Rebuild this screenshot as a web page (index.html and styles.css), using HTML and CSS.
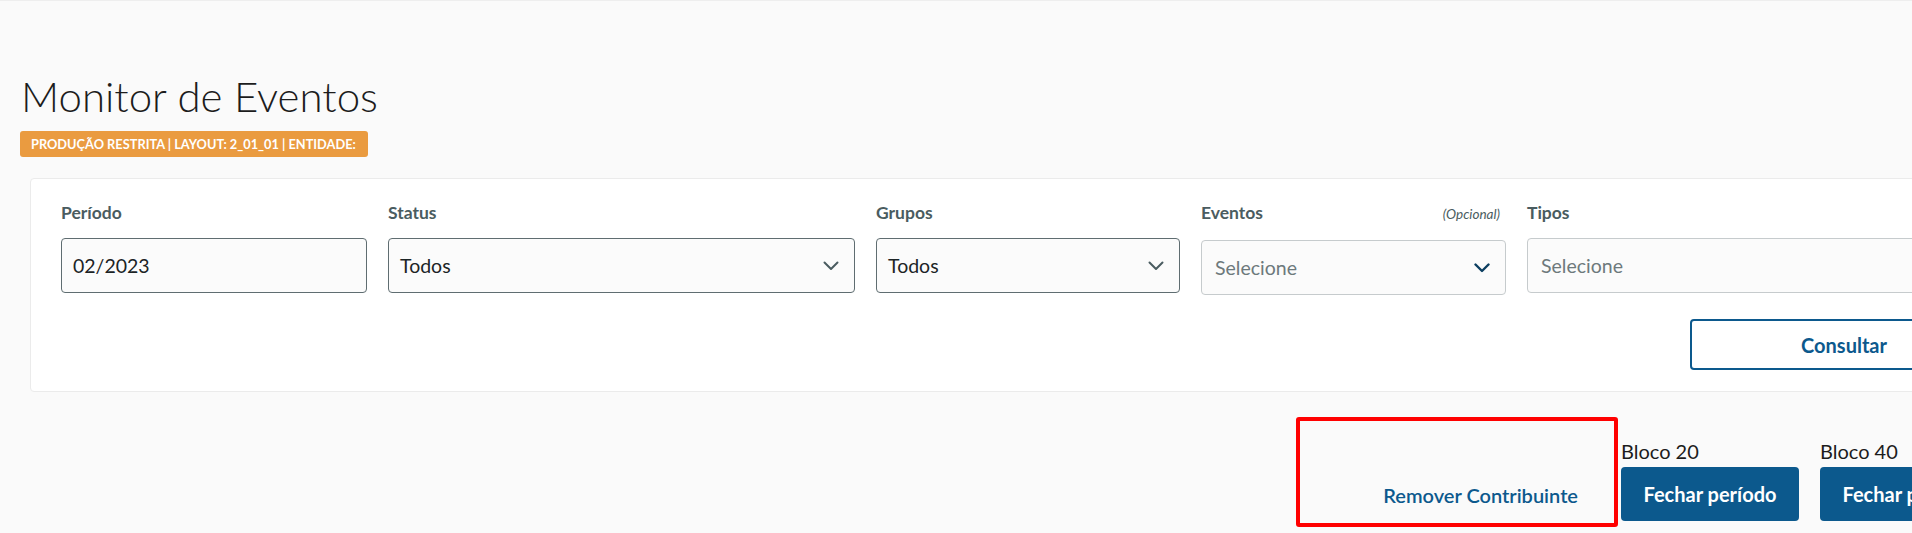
FILE: index.html
```html
<!DOCTYPE html>
<html lang="pt-BR">
<head>
	<meta charset="UTF-8">
	<title>Monitor de Eventos</title>
	<link rel="stylesheet" href="styles.css">
</head>
<body>
	<div class="page">
		<!--cabeçalho-->
		<div class="page-header">
			<h1 class="page-title">Monitor de Eventos</h1>
			<span class="env-tag">PRODUÇÃO RESTRITA | LAYOUT: 2_01_01 | ENTIDADE:</span>
		</div>

		<!--filtros-->
		<div class="filter-card">
			<div class="filter-grid">
				<div class="field">
					<div class="field-label">Período</div>
					<div class="input">02/2023</div>
				</div>
				<div class="field">
					<div class="field-label">Status</div>
					<div class="input select">
						<span>Todos</span>
						<svg class="chevron" width="16" height="10" viewBox="0 0 16 10"><path d="M1.5 1.5 8 8l6.5-6.5" fill="none" stroke="currentColor" stroke-width="2" stroke-linecap="round" stroke-linejoin="round"/></svg>
					</div>
				</div>
				<div class="field">
					<div class="field-label">Grupos</div>
					<div class="input select">
						<span>Todos</span>
						<svg class="chevron" width="16" height="10" viewBox="0 0 16 10"><path d="M1.5 1.5 8 8l6.5-6.5" fill="none" stroke="currentColor" stroke-width="2" stroke-linecap="round" stroke-linejoin="round"/></svg>
					</div>
				</div>
				<div class="field">
					<div class="field-label">Eventos <em class="optional">(Opcional)</em></div>
					<div class="input select disabled">
						<span>Selecione</span>
						<svg class="chevron" width="16" height="10" viewBox="0 0 16 10"><path d="M1.5 1.5 8 8l6.5-6.5" fill="none" stroke="currentColor" stroke-width="2.4" stroke-linecap="round" stroke-linejoin="round"/></svg>
					</div>
				</div>
				<div class="field">
					<div class="field-label">Tipos</div>
					<div class="input disabled">Selecione</div>
				</div>
			</div>
			<div class="filter-actions">
				<button class="btn-outline">Consultar</button>
			</div>
		</div>

		<!--fechamento-->
		<div class="closing-bar">
			<div class="remove-box">
				<a class="link-btn">Remover Contribuinte</a>
			</div>
			<div class="block-group">
				<div class="block-label">Bloco 20</div>
				<button class="btn-primary">Fechar período</button>
			</div>
			<div class="block-group">
				<div class="block-label">Bloco 40</div>
				<button class="btn-primary">Fechar período</button>
			</div>
		</div>
	</div>
</body>
</html>
```

FILE: styles.css
```css
* {
    padding: 0;
    margin: 0;
    box-sizing: border-box;
}

html {
    overflow: hidden;
}

body {
    background: #fafafa;
    border-top: 1px solid #eeeeee;
    font-family: Lato, "Liberation Sans", sans-serif;
    color: #1d1d1d;
}

.page {
    width: 2060px;
    padding-left: 20px;
}

/* cabeçalho */
.page-header {
    padding-top: 70px;
}

.page-title {
    font-size: 42px;
    font-weight: 300;
    line-height: 1.2;
    color: #1c1c1c;
    margin-left: 1px;
}

.env-tag {
    display: inline-block;
    margin-top: 10px;
    height: 26px;
    line-height: 26px;
    padding: 0 12px 0 11px;
    background: #ea9b40;
    border-radius: 3px;
    color: #fff;
    font-size: 12.8px;
    font-weight: 700;
}

/* filtros */
.filter-card {
    width: 1999px;
    margin: 21px 0 0 10px;
    padding: 24px 30px 21px;
    background: #fff;
    border: 1px solid #ebebeb;
    border-radius: 4px;
}

.filter-grid {
    display: grid;
    grid-template-columns: 306px 467px 304px 305px 1fr;
    column-gap: 21px;
}

.field-label {
    display: flex;
    justify-content: space-between;
    align-items: baseline;
    font-size: 17.5px;
    font-weight: 700;
    line-height: 19px;
    color: #4a5c60;
    margin-bottom: 16px;
}

.optional {
    font-size: 13.5px;
    font-weight: 400;
    color: #4a5c60;
    padding-right: 6px;
}

.input {
    display: flex;
    align-items: center;
    justify-content: space-between;
    height: 55px;
    padding: 0 15px 0 11px;
    background: #fbfbfb;
    border: 1px solid #5f6d71;
    border-radius: 4px;
    font-size: 19.5px;
    color: #1c2426;
}

.input.disabled {
    border-color: #c6cbcd;
    color: #6d797c;
    padding-left: 13px;
}

.chevron {
    color: #4a5c60;
}

.disabled .chevron {
    color: #0c3f61;
}

.filter-actions {
    display: flex;
    justify-content: flex-end;
    margin-top: 24px;
}

.btn-outline {
    width: 308px;
    height: 51px;
    background: #fff;
    border: 2px solid #0c598d;
    border-radius: 4px;
    font-family: inherit;
    font-size: 20px;
    font-weight: 700;
    color: #0c598d;
    cursor: pointer;
}

/* fechamento */
.closing-bar {
    display: flex;
    justify-content: flex-end;
    align-items: flex-end;
    gap: 21px;
    width: 1999px;
    margin: 25px 0 0 10px;
    padding: 0 31px;
}

.remove-box {
    display: flex;
    justify-content: flex-end;
    align-items: flex-end;
    width: 322px;
    height: 110px;
    margin-right: -18px;
    padding: 0 36px 16px 0;
    border: 4px solid #ff0000;
    border-radius: 3px;
}

.link-btn {
    font-size: 20px;
    font-weight: 600;
    line-height: 24px;
    color: #0c598d;
    cursor: pointer;
}

.block-group {
    margin-bottom: 6px;
}

.block-label {
    font-size: 20px;
    line-height: 22px;
    color: #1c1c1c;
    margin-bottom: 5px;
}

.btn-primary {
    width: 178px;
    height: 54px;
    background: #0c598d;
    border: 0;
    border-radius: 4px;
    font-family: inherit;
    font-size: 20px;
    font-weight: 700;
    color: #fff;
    cursor: pointer;
}
```
